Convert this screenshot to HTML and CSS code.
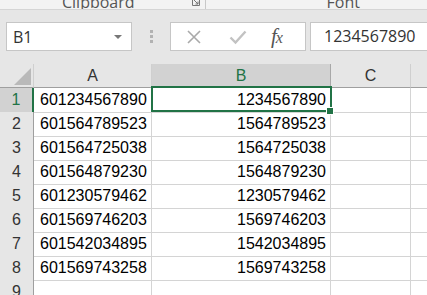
FILE: index.html
```html
<!DOCTYPE html>
<html>
<head>
    <meta name="viewport" content="width=device-width, initial-scale=1">
    <link rel="stylesheet" href="styles.css">
</head>

<body>
    <div class="ribbon">
        <span class="group-label clipboard">Clipboard</span>
        <svg class="launcher" width="8" height="8" viewBox="0 0 8 8">
            <path d="M0.5 0 V7.5 H7.5 V0 M2 2 L6 6 M6 3.5 V6 H3.5" stroke="#777" stroke-width="1" fill="none"/>
        </svg>
        <span class="group-sep"></span>
        <span class="group-label font">Font</span>
    </div>

    <div class="formula-bar">
        <div class="name-box">
            <span>B1</span>
            <span class="drop"></span>
        </div>
        <div class="grip">
            <i></i><i></i><i></i>
        </div>
        <div class="fx-box">
            <svg width="16" height="16" viewBox="0 0 16 16" class="ico">
                <path d="M2 2 L14 14 M14 2 L2 14" stroke="#a9a9a9" stroke-width="1.6" fill="none"/>
            </svg>
            <svg width="18" height="16" viewBox="0 0 18 16" class="ico">
                <path d="M1.5 8.5 L6.5 13.5 L16.5 2.5" stroke="#c2c2c2" stroke-width="2.4" fill="none"/>
            </svg>
            <span class="fx"><i>f</i><i>x</i></span>
        </div>
        <div class="formula-input">1234567890</div>
    </div>

    <div class="sheet">
        <div class="corner"><span class="tri"></span></div>
        <div class="col-head">A</div>
        <div class="col-head active">B</div>
        <div class="col-head">C</div>
        <div class="col-head last"></div>
    </div>
    <div id="rows"></div>

    <script>
        // данные листа: столбец A и столбец B
        let data = [
            ["601234567890", "1234567890"],
            ["601564789523", "1564789523"],
            ["601564725038", "1564725038"],
            ["601564879230", "1564879230"],
            ["601230579462", "1230579462"],
            ["601569746203", "1569746203"],
            ["601542034895", "1542034895"],
            ["601569743258", "1569743258"],
            ["", ""]
        ];

        let rows = document.getElementById("rows");
        data.forEach(function (r, i) {
            let row = document.createElement("div");
            row.className = "sheet";
            let head = i == 0 ? "row-head active" : "row-head";
            let bCell = i == 0 ? '<div class="cell num sel-cell">' + r[1] +
                '<span class="selection"></span><span class="handle"></span></div>'
                : '<div class="cell num">' + r[1] + '</div>';
            row.innerHTML =
                '<div class="' + head + '">' + (i + 1) + '</div>' +
                '<div class="cell">' + r[0] + '</div>' +
                bCell +
                '<div class="cell"></div>' +
                '<div class="cell last"></div>';
            rows.appendChild(row);
        });
    </script>
</body>
</html>
```

FILE: styles.css
```css
body {
    margin: 0;
    background: #fff;
    font-family: "Liberation Sans", Arial, sans-serif;
    overflow: hidden;
}

/* Полоса ленты сверху (обрезанная) */
.ribbon {
    height: 9px;
    background: #f3f3f3;
    border-bottom: 1px solid #d5d5d5;
    display: flex;
    align-items: flex-end;
    overflow: hidden;
    font-family: "Open Sans", sans-serif;
    font-size: 16px;
    color: #555;
}

.group-label {
    line-height: 1;
    margin-bottom: -1px;
}

.clipboard {
    margin-left: 62px;
}

.launcher {
    margin-left: 57px;
    margin-bottom: 3px;
}

.group-sep {
    width: 1px;
    height: 9px;
    background: #c8c8c8;
    margin-left: 5px;
}

.font {
    margin-left: 121px;
}

/* Строка формул */
.formula-bar {
    height: 54px;
    background: #e6e6e6;
    display: flex;
    align-items: flex-start;
    padding-top: 12px;
    box-sizing: border-box;
    font-family: "Open Sans", sans-serif;
    font-size: 16px;
    color: #333;
}

.name-box {
    width: 126px;
    height: 29px;
    margin-left: 6px;
    background: #fff;
    border: 1px solid #c6c6c6;
    box-sizing: border-box;
    display: flex;
    align-items: center;
    justify-content: space-between;
    padding: 0 9px 0 6px;
}

.drop {
    width: 0;
    height: 0;
    border-left: 4px solid transparent;
    border-right: 4px solid transparent;
    border-top: 4px solid #777;
}

.grip {
    width: 38px;
    height: 29px;
    display: flex;
    flex-direction: column;
    align-items: center;
    justify-content: center;
    gap: 2px;
}

.grip i {
    width: 3px;
    height: 3px;
    background: #b2b2b2;
}

.fx-box {
    width: 136px;
    height: 29px;
    background: #fff;
    border: 1px solid #c6c6c6;
    box-sizing: border-box;
    display: flex;
    align-items: center;
    padding-left: 15px;
    gap: 27px;
}

.fx {
    font-family: "Liberation Serif", serif;
    font-size: 21px;
    color: #555;
    margin-left: -3px;
    letter-spacing: -1px;
}

.fx i:last-child {
    font-size: 16px;
}

.formula-input {
    flex: 1;
    height: 29px;
    margin-left: 4px;
    background: #fff;
    border: 1px solid #c6c6c6;
    border-right: none;
    box-sizing: border-box;
    padding-left: 13px;
    line-height: 27px;
}

/* Сетка листа */
.sheet {
    display: grid;
    grid-template-columns: 34px 118px 179px 80px 1fr;
    height: 24px;
    font-size: 16px;
    color: #000;
}

.corner {
    background: #e6e6e6;
    border-right: 1px solid #cfcfcf;
    border-bottom: 1px solid #9f9f9f;
    position: relative;
}

.tri {
    position: absolute;
    right: 2px;
    bottom: 2px;
    width: 0;
    height: 0;
    border-left: 17px solid transparent;
    border-bottom: 17px solid #b9b9b9;
}

.col-head {
    background: #e6e6e6;
    border-right: 1px solid #cfcfcf;
    border-bottom: 1px solid #9f9f9f;
    text-align: center;
    line-height: 23px;
    color: #333;
}

.col-head.active {
    background: #d2d2d2;
    color: #217346;
    border-bottom: 1px solid #217346;
    border-right-color: #a8a8a8;
}

.row-head {
    background: #e6e6e6;
    border-right: 1px solid #9f9f9f;
    border-bottom: 1px solid #cfcfcf;
    text-align: center;
    line-height: 23px;
    color: #333;
}

.row-head.active {
    background: #d2d2d2;
    color: #217346;
    border-right: 2px solid #217346;
}

.cell {
    border-right: 1px solid #d4d4d4;
    border-bottom: 1px solid #d4d4d4;
    line-height: 24px;
    padding-left: 6px;
    white-space: nowrap;
}

.last, .col-head.last {
    border-right: none;
}

.num {
    text-align: right;
    padding-left: 0;
    padding-right: 4px;
}

/* Рамка выделенной ячейки */
.sel-cell {
    position: relative;
}

.selection {
    position: absolute;
    left: -1px;
    top: -2px;
    width: 181px;
    height: 26px;
    border: 2px solid #217346;
    box-sizing: border-box;
}

.handle {
    position: absolute;
    right: -4px;
    bottom: -3px;
    width: 6px;
    height: 6px;
    background: #217346;
    border: 1px solid #fff;
}
```
